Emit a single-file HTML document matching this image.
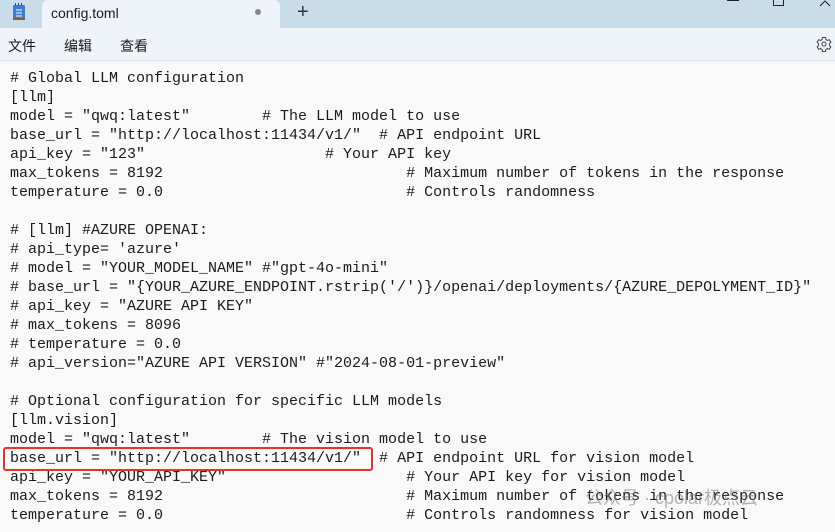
<!DOCTYPE html>
<html><head><meta charset="utf-8"><style>
html,body{margin:0;padding:0;width:835px;height:532px;overflow:hidden;background:#f9f9f9;font-family:"Liberation Sans","Noto Sans CJK SC",sans-serif}
.title{position:absolute;left:0;top:0;width:835px;height:28px;background:#c9dcea}
.tab{position:absolute;left:42px;top:0;width:238px;height:28px;background:#eef4f9;border-radius:6px 6px 0 0;font-size:14px;color:#1a1a1a}
.menu{position:absolute;left:0;top:28px;width:835px;height:32px;background:#eef4f9;border-bottom:1px solid #dde2e6;font-size:14px;color:#1a1a1a}
pre{position:absolute;left:10px;top:69px;margin:0;font-family:"Liberation Mono",monospace;font-size:15px;line-height:19px;color:#1b1b1b}
.box{position:absolute;left:3px;top:447px;width:366px;height:20px;border:2px solid #e5332a;border-radius:3px}
</style></head><body>
<div class="title">
<svg style="position:absolute;left:12px;top:3px" width="14" height="18"><rect x="1" y="2" width="12" height="15" rx="1.5" fill="#3a7bd5"/><rect x="1" y="15" width="12" height="2" fill="#8a5a2b"/><g stroke="#fff" stroke-width="1"><line x1="4" y1="7" x2="10" y2="7"/><line x1="4" y1="10" x2="10" y2="10"/><line x1="4" y1="13" x2="10" y2="13"/></g><g fill="#2a4f8a"><rect x="3" y="0" width="1" height="3"/><rect x="6" y="0" width="1" height="3"/><rect x="9" y="0" width="1" height="3"/></g></svg>
<div class="tab"><span style="position:absolute;left:9px;top:5px">config.toml</span><span style="position:absolute;left:213px;top:9px;width:6px;height:6px;border-radius:3px;background:#888"></span></div>
<span style="position:absolute;left:297px;top:1px;font-size:20px;color:#333">+</span>
<div style="position:absolute;left:727px;top:0;width:12px;height:1px;background:#222"></div>
<div style="position:absolute;left:773px;top:-2px;width:9px;height:7px;border:1px solid #222;border-top:none"></div>
<svg style="position:absolute;left:819px;top:0" width="12" height="7"><path d="M1 6 L6 1 L11 6" stroke="#222" fill="none"/></svg>
</div>
<div class="menu">
<span style="position:absolute;left:8px;top:8px">文件</span>
<span style="position:absolute;left:64px;top:8px">编辑</span>
<span style="position:absolute;left:120px;top:8px">查看</span>
<svg style="position:absolute;left:816px;top:8px" width="16" height="16" viewBox="0 0 16 16"><path d="M6.5 1.5h3l.4 2 1.6.9 1.9-.7 1.5 2.6-1.5 1.3v1.8l1.5 1.3-1.5 2.6-1.9-.7-1.6.9-.4 2h-3l-.4-2-1.6-.9-1.9.7L1.1 10.7l1.5-1.3V7.6L1.1 6.3l1.5-2.6 1.9.7 1.6-.9z" fill="none" stroke="#444"/><circle cx="8" cy="8" r="2" fill="none" stroke="#444"/></svg>
</div>
<pre># Global LLM configuration
[llm]
model = "qwq:latest"        # The LLM model to use
base_url = "http://localhost:11434/v1/"  # API endpoint URL
api_key = "123"                    # Your API key
max_tokens = 8192                           # Maximum number of tokens in the response
temperature = 0.0                           # Controls randomness

# [llm] #AZURE OPENAI:
# api_type= 'azure'
# model = "YOUR_MODEL_NAME" #"gpt-4o-mini"
# base_url = "{YOUR_AZURE_ENDPOINT.rstrip('/')}/openai/deployments/{AZURE_DEPOLYMENT_ID}"
# api_key = "AZURE API KEY"
# max_tokens = 8096
# temperature = 0.0
# api_version="AZURE API VERSION" #"2024-08-01-preview"

# Optional configuration for specific LLM models
[llm.vision]
model = "qwq:latest"        # The vision model to use
base_url = "http://localhost:11434/v1/"  # API endpoint URL for vision model
api_key = "YOUR_API_KEY"                    # Your API key for vision model
max_tokens = 8192                           # Maximum number of tokens in the response
temperature = 0.0                           # Controls randomness for vision model</pre>
<div class="box"></div>
<span style="position:absolute;left:585px;top:484px;font-size:18px;color:rgba(120,120,120,0.55)">公众号 · cpolar极点云</span>
</body></html>
